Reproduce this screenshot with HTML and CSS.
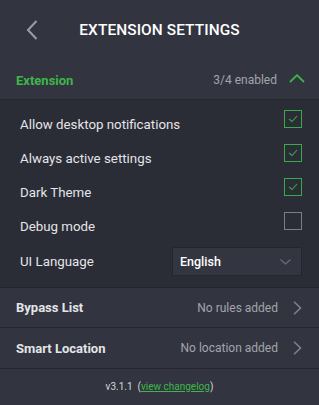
FILE: index.html
```html
<!DOCTYPE html>
<html>
<head>
<meta charset="utf-8">
<link rel="stylesheet" href="styles.css">
</head>
<body>
<div class="app">
  <header class="topbar">
    <div class="back">
      <svg width="12" height="20" viewBox="0 0 12 20"><path d="M10.5 1 L2 10 L10.5 19" fill="none" stroke="#9b9da3" stroke-width="2"/></svg>
    </div>
    <h1 class="title">EXTENSION SETTINGS</h1>
    <div></div>
  </header>

  <div class="section-head">
    <span class="section-name">Extension</span>
    <span class="section-meta">3/4 enabled</span>
    <svg class="up" width="16" height="9" viewBox="0 0 16 9"><path d="M1 8 L8 1.2 L15 8" fill="none" stroke="#3bb54a" stroke-width="1.8"/></svg>
  </div>

  <div class="settings">
    <div class="row">
      <span class="label">Allow desktop notifications</span>
      <span class="box on"><svg width="10" height="8" viewBox="0 0 10 8"><path d="M1 3.8 L4 6.5 L9 1" fill="none" stroke="#3ba94a" stroke-width="1.1"/></svg></span>
    </div>
    <div class="row">
      <span class="label">Always active settings</span>
      <span class="box on"><svg width="10" height="8" viewBox="0 0 10 8"><path d="M1 3.8 L4 6.5 L9 1" fill="none" stroke="#3ba94a" stroke-width="1.1"/></svg></span>
    </div>
    <div class="row">
      <span class="label">Dark Theme</span>
      <span class="box on"><svg width="10" height="8" viewBox="0 0 10 8"><path d="M1 3.8 L4 6.5 L9 1" fill="none" stroke="#3ba94a" stroke-width="1.1"/></svg></span>
    </div>
    <div class="row">
      <span class="label">Debug mode</span>
      <span class="box"></span>
    </div>
    <div class="row lang">
      <span class="label">UI Language</span>
      <div class="select">
        <span>English</span>
        <svg width="11" height="6" viewBox="0 0 11 6"><path d="M0.5 0.5 L5.5 5 L10.5 0.5" fill="none" stroke="#6b6e76" stroke-width="1.1"/></svg>
      </div>
    </div>
  </div>

  <div class="nav-row first">
    <span class="nav-name">Bypass List</span>
    <span class="nav-meta">No rules added</span>
    <svg class="right" width="9" height="14" viewBox="0 0 9 14"><path d="M1 0.7 L7.5 7 L1 13.3" fill="none" stroke="#7d8088" stroke-width="1.6"/></svg>
  </div>
  <div class="nav-row">
    <span class="nav-name">Smart Location</span>
    <span class="nav-meta">No location added</span>
    <svg class="right" width="9" height="14" viewBox="0 0 9 14"><path d="M1 0.7 L7.5 7 L1 13.3" fill="none" stroke="#7d8088" stroke-width="1.6"/></svg>
  </div>

  <footer class="footer">
    <span>v3.1.1</span>&nbsp;&nbsp;(<a class="link" href="#">view changelog</a>)
  </footer>
</div>
</body>
</html>
```

FILE: styles.css
```css
* { box-sizing: border-box; }
html, body {
  margin: 0;
  padding: 0;
  background: #323540;
  font-family: Roboto, "Noto Sans", Arial, sans-serif;
}
.app {
  width: 319px;
  height: 405px;
  background: #323540;
  color: #e4e5e8;
  display: flex;
  flex-direction: column;
  overflow: hidden;
}
.topbar {
  height: 60px;
  display: grid;
  grid-template-columns: 1fr auto 1fr;
  align-items: center;
}
.back {
  padding-left: 26px;
  display: flex;
  align-items: center;
}
.title {
  margin: 0;
  font-size: 15.4px;
  font-weight: 500;
  color: #ffffff;
  letter-spacing: 0.1px;
}
.section-head {
  height: 40px;
  display: flex;
  align-items: center;
  padding: 0 14px 0 16px;
  border-bottom: 1px solid #24262e;
}
.section-name {
  color: #3fb54a;
  font-weight: 700;
  font-size: 13px;
  flex: 1;
  padding-top: 1px;
}
.section-meta {
  color: #a2a4aa;
  font-size: 12px;
  margin-right: 12px;
  padding-top: 1px;
}
.up { margin-top: -2px; }
.settings {
  background: #2a2c36;
  padding: 7px 17px 11px 20px;
  display: flex;
  flex-direction: column;
}
.row {
  height: 34px;
  display: flex;
  align-items: center;
  justify-content: space-between;
}
.label {
  font-size: 13.3px;
  color: #e4e5e8;
}
.box {
  width: 18px;
  height: 18px;
  border: 1px solid #7c7f87;
  margin-bottom: 10px;
  display: flex;
  align-items: center;
  justify-content: center;
}
.box.on { border-color: #3ba94a; }
.row.lang {
  height: 29px;
  margin-top: 4px;
}
.select {
  width: 130px;
  height: 29px;
  background: #333641;
  border: 1px solid #24262e;
  display: flex;
  align-items: center;
  justify-content: space-between;
  padding: 0 10px 0 7px;
  font-size: 12.5px;
  font-weight: 500;
  color: #ffffff;
}
.nav-row {
  height: 41px;
  display: flex;
  align-items: center;
  padding: 0 17px 0 16px;
  border-top: 1px solid #24262e;
}
.nav-row.first { height: 40px; }
.nav-name {
  flex: 1;
  font-size: 13px;
  font-weight: 700;
  color: #e4e5e8;
}
.nav-meta {
  font-size: 12px;
  color: #a2a4aa;
  margin-right: 15px;
}
.footer {
  flex: 1;
  border-top: 1px solid #24262e;
  display: flex;
  align-items: center;
  justify-content: center;
  font-size: 10px;
  color: #d4d5d8;
  padding-bottom: 1px;
}
.link {
  color: #3fb54a;
  text-decoration: underline;
}
```
